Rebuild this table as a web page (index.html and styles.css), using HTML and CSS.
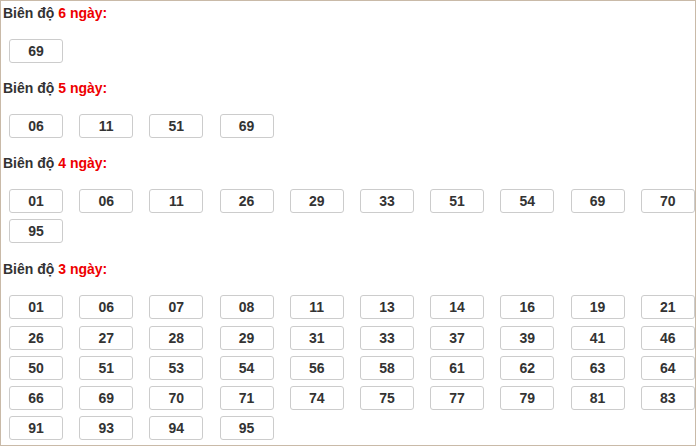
FILE: index.html
```html
<!DOCTYPE html>
<html lang="vi">
<head>
<meta charset="utf-8">
<title>Biên độ</title>
<link rel="stylesheet" href="styles.css">
</head>
<body>
<div class="frame">
  <section class="group">
    <h3 class="title">Biên độ <span class="hl">6 ngày:</span></h3>
    <div class="nums">
      <span class="num">69</span>
    </div>
  </section>
  <section class="group">
    <h3 class="title">Biên độ <span class="hl">5 ngày:</span></h3>
    <div class="nums">
      <span class="num">06</span><span class="num">11</span><span class="num">51</span><span class="num">69</span>
    </div>
  </section>
  <section class="group">
    <h3 class="title">Biên độ <span class="hl">4 ngày:</span></h3>
    <div class="nums">
      <span class="num">01</span><span class="num">06</span><span class="num">11</span><span class="num">26</span><span class="num">29</span><span class="num">33</span><span class="num">51</span><span class="num">54</span><span class="num">69</span><span class="num">70</span>
      <span class="num">95</span>
    </div>
  </section>
  <section class="group">
    <h3 class="title">Biên độ <span class="hl">3 ngày:</span></h3>
    <div class="nums">
      <span class="num">01</span><span class="num">06</span><span class="num">07</span><span class="num">08</span><span class="num">11</span><span class="num">13</span><span class="num">14</span><span class="num">16</span><span class="num">19</span><span class="num">21</span>
      <span class="num">26</span><span class="num">27</span><span class="num">28</span><span class="num">29</span><span class="num">31</span><span class="num">33</span><span class="num">37</span><span class="num">39</span><span class="num">41</span><span class="num">46</span>
      <span class="num">50</span><span class="num">51</span><span class="num">53</span><span class="num">54</span><span class="num">56</span><span class="num">58</span><span class="num">61</span><span class="num">62</span><span class="num">63</span><span class="num">64</span>
      <span class="num">66</span><span class="num">69</span><span class="num">70</span><span class="num">71</span><span class="num">74</span><span class="num">75</span><span class="num">77</span><span class="num">79</span><span class="num">81</span><span class="num">83</span>
      <span class="num">91</span><span class="num">93</span><span class="num">94</span><span class="num">95</span>
    </div>
  </section>
</div>
</body>
</html>
```
FILE: styles.css
```css
html, body {
  margin: 0;
  padding: 0;
  background: #ffffff;
}

.frame {
  box-sizing: border-box;
  width: 696px;
  height: 446px;
  border: 1px solid #c9baa8;
  padding: 3px 0 0 2px;
  font-family: "Liberation Sans", Arial, sans-serif;
  overflow: hidden;
}

.group {
  margin: 0 0 16px 0;
}

.group:nth-child(3) {
  margin-bottom: 17px;
}

.title {
  margin: 0 0 17px 0;
  font-size: 14px;
  line-height: 18px;
  font-weight: bold;
  color: #333333;
}

.hl {
  color: #ee0000;
}

.nums {
  display: grid;
  grid-template-columns: repeat(10, 54px);
  column-gap: 16.2px;
  row-gap: 6.25px;
  padding-left: 6px;
}

.num {
  box-sizing: border-box;
  height: 24px;
  border: 1px solid #cccccc;
  border-radius: 3px;
  font-size: 14px;
  font-weight: bold;
  line-height: 22px;
  text-align: center;
  color: #333333;
}
```
